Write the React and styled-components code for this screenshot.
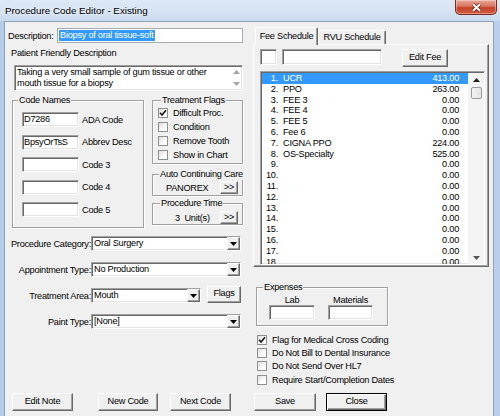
import React from "react";
//styled components
import styled, { createGlobalStyle, css } from "styled-components";

const GlobalStyle = createGlobalStyle`
  html, body { margin: 0; padding: 0; }
  body { width: 500px; height: 416px; overflow: hidden; background: #bfd3ed; }
  * { box-sizing: border-box; }
`;

const uiFont = `"Liberation Sans", Arial, sans-serif`;

//classic 3D borders
const sunken = css`
  border: 1px solid;
  border-color: #a0a0a0 #ffffff #ffffff #a0a0a0;
  box-shadow: inset 1px 1px 0 #696969, inset -1px -1px 0 #e3e3e3;
`;

const raised = css`
  border: 1px solid;
  border-color: #ffffff #696969 #696969 #ffffff;
  box-shadow: inset -1px -1px 0 #a0a0a0;
`;

const fees = [
  ["1.", "UCR", "413.00"],
  ["2.", "PPO", "263.00"],
  ["3.", "FEE 3", "0.00"],
  ["4.", "FEE 4", "0.00"],
  ["5.", "FEE 5", "0.00"],
  ["6.", "Fee 6", "0.00"],
  ["7.", "CIGNA PPO", "224.00"],
  ["8.", "OS-Specialty", "525.00"],
  ["9.", "", "0.00"],
  ["10.", "", "0.00"],
  ["11.", "", "0.00"],
  ["12.", "", "0.00"],
  ["13.", "", "0.00"],
  ["14.", "", "0.00"],
  ["15.", "", "0.00"],
  ["16.", "", "0.00"],
  ["17.", "", "0.00"],
  ["18.", "", "0.00"],
];

const Check = () => (
  <svg width="8" height="8" viewBox="0 0 8 8">
    <polyline points="1,3.8 3,6 7,1.2" fill="none" stroke="#1a1a1a" strokeWidth="1.6" />
  </svg>
);

const Arrow = ({ up, color = "#000" }) => (
  <svg width="7" height="4" viewBox="0 0 7 4">
    <polygon points={up ? "0,4 7,4 3.5,0" : "0,0 7,0 3.5,4"} fill={color} />
  </svg>
);

const CheckItem = ({ checked, label, h }) => (
  <CheckRow $h={h}>
    <CheckSquare>{checked && <Check />}</CheckSquare>
    {label}
  </CheckRow>
);

const Combo = ({ w, value }) => (
  <ComboBox $w={w}>
    <ComboText>{value}</ComboText>
    <DropButton>
      <Arrow />
    </DropButton>
  </ComboBox>
);

const App = () => {
  return (
    <Window>
      <GlobalStyle />
      <TitleBar>
        <Title>Procedure Code Editor - Existing</Title>
        <CloseButton>
          <svg width="11" height="9" viewBox="0 0 11 9">
            <path d="M2 1.2 L9 7.8 M9 1.2 L2 7.8" stroke="#6a1e12" strokeWidth="3.4" />
            <path d="M2 1.2 L9 7.8 M9 1.2 L2 7.8" stroke="#ffffff" strokeWidth="2" />
          </svg>
        </CloseButton>
      </TitleBar>
      <Client>
        <LeftPane>
          <DescRow>
            <DescLabel>Description:</DescLabel>
            <TextBox $w={186} $flat>
              <Selected>Biopsy of oral tissue-soft</Selected>
            </TextBox>
          </DescRow>
          <PlainLabel>Patient Friendly Description</PlainLabel>
          <MemoBox>
            <MemoText>
              Taking a very small sample of gum tissue or other
              <br />
              mouth tissue for a biopsy
            </MemoText>
            <MemoScroll>
              <Arrow up color="#a3a3a3" />
              <Arrow color="#a3a3a3" />
            </MemoScroll>
          </MemoBox>

          <MidRow>
            <GroupBox $w={132} $h={128} $ml={7}>
              <Legend $x={5}>Code Names</Legend>
              <CodeList>
                {[
                  ["D7286", "ADA Code"],
                  ["BpsyOrTsS", "Abbrev Desc"],
                  ["", "Code 3"],
                  ["", "Code 4"],
                  ["", "Code 5"],
                ].map(([v, l]) => (
                  <CodeRow key={l}>
                    <TextBox $w={57}>{v}</TextBox>
                    {l}
                  </CodeRow>
                ))}
              </CodeList>
            </GroupBox>

            <SideColumn>
              <GroupBox $w={91} $h={64}>
                <Legend $x={8}>Treatment Flags</Legend>
                <CheckList $pl={5}>
                  <CheckItem h={14} checked label="Difficult Proc." />
                  <CheckItem h={14} label="Condition" />
                  <CheckItem h={14} label="Remove Tooth" />
                  <CheckItem h={14} label="Show in Chart" />
                </CheckList>
              </GroupBox>
              <GroupBox $w={91} $h={22} $mt={10}>
                <Legend $x={6}>Auto Continuing Care</Legend>
                <PickRow $mt={1}>
                  <PickText $pl={13}>PANOREX</PickText>
                  <Button $w={18} $h={13}>&gt;&gt;</Button>
                </PickRow>
              </GroupBox>
              <GroupBox $w={91} $h={22} $mt={7}>
                <Legend $x={7}>Procedure Time</Legend>
                <PickRow $mt={2}>
                  <PickText $pl={22}>3&nbsp; Unit(s)</PickText>
                  <Button $w={18} $h={13}>&gt;&gt;</Button>
                </PickRow>
              </GroupBox>
            </SideColumn>
          </MidRow>

          <FormList>
            <FormRow>
              <FormLabel>Procedure Category:</FormLabel>
              <Combo w={150} value="Oral Surgery" />
            </FormRow>
            <FormRow>
              <FormLabel>Appointment Type:</FormLabel>
              <Combo w={150} value="No Production" />
            </FormRow>
            <FormRow>
              <FormLabel>Treatment Area:</FormLabel>
              <Combo w={110} value="Mouth" />
              <FlagsButton $w={34} $h={17}>Flags</FlagsButton>
            </FormRow>
            <FormRow>
              <FormLabel>Paint Type:</FormLabel>
              <Combo w={150} value="[None]" />
            </FormRow>
          </FormList>

          <ButtonRow $pl={7}>
            <Button $w={61}>Edit Note</Button>
            <Button $w={60} $ml={25}>New Code</Button>
            <Button $w={61} $ml={12}>Next Code</Button>
          </ButtonRow>
        </LeftPane>

        <RightPane>
          <TabStrip>
            <Tab $active $w={63}>Fee Schedule</Tab>
            <Tab $w={68}>RVU Schedule</Tab>
          </TabStrip>
          <TabPanel>
            <FeeInputs>
              <TextBox $w={17} $h={16} />
              <TextBox $w={100} $h={16} />
              <Button $w={46} $ml={15}>Edit Fee</Button>
            </FeeInputs>
            <ListBox>
              <ListRows>
                {fees.map(([n, name, amt], i) => (
                  <FeeRow key={n} $sel={i === 0}>
                    <FeeNum>{n}</FeeNum>
                    <FeeName>{name}</FeeName>
                    <span>{amt}</span>
                  </FeeRow>
                ))}
              </ListRows>
              <ScrollBar>
                <ScrollArrow>
                  <Arrow up color="#222" />
                </ScrollArrow>
                <Thumb />
                <ScrollArrow $bottom>
                  <Arrow color="#555" />
                </ScrollArrow>
              </ScrollBar>
            </ListBox>
          </TabPanel>

          <GroupBox $w={132} $h={39} $mt={20} $ml={3}>
            <Legend $x={6}>Expenses</Legend>
            <ExpenseCols>
              <ExpenseCol>
                <ExpenseLabel>Lab</ExpenseLabel>
                <TextBox $w={46} />
              </ExpenseCol>
              <ExpenseCol>
                <ExpenseLabel>Materials</ExpenseLabel>
                <TextBox $w={45} />
              </ExpenseCol>
            </ExpenseCols>
          </GroupBox>

          <CheckList $pl={4} $mt={7}>
            <CheckItem h={13.3} checked label="Flag for Medical Cross Coding" />
            <CheckItem h={13.3} label="Do Not Bill to Dental Insurance" />
            <CheckItem h={13.3} label="Do Not Send Over HL7" />
            <CheckItem h={13.3} label="Require Start/Completion Dates" />
          </CheckList>

          <ButtonRow $pl={1}>
            <Button $w={62}>Save</Button>
            <Button $w={61} $ml={10} $default>Close</Button>
          </ButtonRow>
        </RightPane>
      </Client>
    </Window>
  );
};

const Window = styled.div`
  width: 500px;
  height: 416px;
  display: flex;
  flex-direction: column;
  background: linear-gradient(to right, #b6cdea, #c6d8ef 50%, #b9cfeb);
  font-family: ${uiFont};
  font-size: 9.2px;
  letter-spacing: -0.25px;
  color: #000;
  overflow: hidden;
`;

const TitleBar = styled.div`
  height: 21px;
  flex: none;
  display: flex;
  align-items: flex-start;
  background: linear-gradient(to bottom, #dfe9f6 0%, #d4e2f2 60%, #cadbef 100%);
`;

const Title = styled.div`
  padding: 4px 0 0 5px;
  font-size: 9.8px;
  letter-spacing: 0;
  line-height: 13px;
  text-shadow: 0 0 5px #ffffff;
`;

const CloseButton = styled.div`
  margin: 0 3px 0 auto;
  width: 42px;
  height: 15px;
  display: flex;
  align-items: center;
  justify-content: center;
  border: 1px solid #7b2b1e;
  border-top: none;
  border-radius: 0 0 5px 5px;
  background: linear-gradient(to bottom, #eaa89a 0%, #d9735e 45%, #c4422a 55%, #d45d40 100%);
  box-shadow: inset 0 0 0 1px rgba(255, 255, 255, 0.35);
`;

const Client = styled.div`
  flex: 1;
  display: flex;
  margin: 0 6px 0 4px;
  background: #f0f0f0;
  border: 1px solid #8fa1b8;
  border-bottom: none;
`;

const LeftPane = styled.div`
  width: 248px;
  flex: none;
  display: flex;
  flex-direction: column;
  padding-bottom: 5px;
`;

const DescRow = styled.div`
  display: flex;
  align-items: center;
  margin-top: 6px;
`;

const DescLabel = styled.span`
  width: 49px;
  margin-left: 3px;
  white-space: nowrap;
`;

const TextBox = styled.div`
  flex: none;
  width: ${(p) => p.$w}px;
  height: ${(p) => p.$h ?? 15}px;
  padding: 0 1px;
  line-height: 13px;
  white-space: nowrap;
  overflow: hidden;
  background: #ffffff;
  ${(p) => (p.$flat ? css`border: 1px solid #a5acb5;` : sunken)}
`;

const Selected = styled.span`
  display: inline-block;
  padding: 0 1px;
  line-height: 11px;
  background: #3399ff;
  color: #ffffff;
`;

const PlainLabel = styled.div`
  margin: 4px 0 0 6px;
  line-height: 12px;
`;

const MemoBox = styled.div`
  width: 229px;
  height: 26px;
  margin: 6px 0 0 9px;
  display: flex;
  background: #ffffff;
  ${sunken}
`;

const MemoText = styled.div`
  flex: 1;
  padding: 1px 2px;
  line-height: 11px;
  white-space: nowrap;
  overflow: hidden;
`;

const MemoScroll = styled.div`
  width: 12px;
  display: flex;
  flex-direction: column;
  justify-content: space-between;
  align-items: center;
  padding: 4px 0 4px;
`;

const MidRow = styled.div`
  display: flex;
  align-items: flex-start;
  margin-top: 9px;
`;

const GroupBox = styled.div`
  flex: none;
  width: ${(p) => p.$w}px;
  height: ${(p) => p.$h}px;
  margin-top: ${(p) => p.$mt ?? 0}px;
  margin-left: ${(p) => p.$ml ?? 0}px;
  display: flex;
  flex-direction: column;
  border: 1px solid #a0a0a0;
  box-shadow: inset 1px 1px 0 #ffffff, 1px 1px 0 #ffffff;
`;

const Legend = styled.div`
  align-self: flex-start;
  height: 12px;
  margin: -7px 0 0 ${(p) => p.$x}px;
  padding: 0 1px;
  line-height: 12px;
  white-space: nowrap;
  background: #f0f0f0;
`;

const CodeList = styled.div`
  display: flex;
  flex-direction: column;
  gap: 7.6px;
  margin-top: 6px;
  padding-left: 9px;
`;

const CodeRow = styled.div`
  display: flex;
  align-items: center;
  gap: 3px;
  white-space: nowrap;
`;

const SideColumn = styled.div`
  display: flex;
  flex-direction: column;
  margin-left: 8px;
`;

const CheckList = styled.div`
  display: flex;
  flex-direction: column;
  padding-left: ${(p) => p.$pl}px;
  margin-top: ${(p) => p.$mt ?? 0}px;
`;

const CheckRow = styled.div`
  display: flex;
  align-items: center;
  height: ${(p) => p.$h}px;
  white-space: nowrap;
`;

const CheckSquare = styled.span`
  flex: none;
  width: 10px;
  height: 10px;
  margin-right: 5px;
  display: flex;
  align-items: center;
  justify-content: center;
  border: 1px solid #8e8f8f;
  background: linear-gradient(135deg, #dedede, #ffffff 70%);
`;

const PickRow = styled.div`
  display: flex;
  align-items: center;
  height: 13px;
  margin-top: ${(p) => p.$mt}px;
  padding-right: 4px;
`;

const PickText = styled.span`
  flex: 1;
  padding-left: ${(p) => p.$pl}px;
  white-space: nowrap;
`;

const Button = styled.button`
  flex: none;
  width: ${(p) => p.$w}px;
  height: ${(p) => p.$h ?? 18}px;
  margin-left: ${(p) => p.$ml ?? 0}px;
  padding: 0;
  font: inherit;
  letter-spacing: inherit;
  line-height: 1;
  color: #000;
  background: #f0f0f0;
  white-space: nowrap;
  ${raised}
  ${(p) =>
    p.$default &&
    css`
      border-color: #000000;
      box-shadow: inset 1px 1px 0 #ffffff, inset -1px -1px 0 #696969, inset -2px -2px 0 #a0a0a0;
    `}
`;

const FlagsButton = styled(Button)`
  margin: 0 0 3px 6px;
`;

const FormList = styled.div`
  display: flex;
  flex-direction: column;
  gap: 11px;
  margin-top: 8px;
`;

const FormRow = styled.div`
  display: flex;
  align-items: center;
  height: 15px;
`;

const FormLabel = styled.span`
  width: 86px;
  text-align: right;
  white-space: nowrap;
`;

const ComboBox = styled.div`
  flex: none;
  width: ${(p) => p.$w}px;
  height: 15px;
  display: flex;
  background: #ffffff;
  ${sunken}
`;

const ComboText = styled.span`
  flex: 1;
  padding-left: 2px;
  line-height: 13px;
  white-space: nowrap;
`;

const DropButton = styled.span`
  width: 13px;
  display: flex;
  align-items: center;
  justify-content: center;
  background: #f0f0f0;
  ${raised}
`;

const ButtonRow = styled.div`
  display: flex;
  margin-top: auto;
  padding-left: ${(p) => p.$pl}px;
`;

const RightPane = styled.div`
  width: 236px;
  flex: none;
  display: flex;
  flex-direction: column;
  padding-bottom: 5px;
`;

const TabStrip = styled.div`
  display: flex;
  align-items: flex-end;
  height: 17px;
  margin-top: 5px;
  padding-left: 2px;
  position: relative;
  z-index: 1;
`;

const Tab = styled.div`
  width: ${(p) => p.$w}px;
  height: ${(p) => (p.$active ? 18 : 14)}px;
  margin-bottom: ${(p) => (p.$active ? -1 : 0)}px;
  padding-top: ${(p) => (p.$active ? 3 : 1)}px;
  text-align: center;
  line-height: 11px;
  white-space: nowrap;
  background: #f0f0f0;
  border: 1px solid;
  border-color: #ffffff #696969 transparent #ffffff;
  border-bottom: none;
  box-shadow: inset -1px 0 0 #a0a0a0;
  border-radius: 2px 2px 0 0;
`;

const TabPanel = styled.div`
  height: 223px;
  display: flex;
  flex-direction: column;
  padding: 4px 3px 0 6px;
  border: 1px solid;
  border-color: #ffffff #696969 #696969 #ffffff;
  box-shadow: inset -1px -1px 0 #a0a0a0;
`;

const FeeInputs = styled.div`
  display: flex;
  align-items: flex-start;
  gap: 0 5px;
  height: 18px;
`;

const ListBox = styled.div`
  width: 225px;
  height: 194px;
  margin-top: 4px;
  display: flex;
  padding: 1px 0 0 1px;
  background: #ffffff;
  ${sunken}
`;

const ListRows = styled.div`
  flex: 1;
  overflow: hidden;
`;

const FeeRow = styled.div`
  display: flex;
  height: 10.8px;
  line-height: 10.8px;
  padding-right: 9px;
  white-space: nowrap;
  background: ${(p) => (p.$sel ? "#3399ff" : "transparent")};
  color: ${(p) => (p.$sel ? "#ffffff" : "#000000")};
`;

const FeeNum = styled.span`
  width: 16px;
  margin-right: 5px;
  text-align: right;
`;

const FeeName = styled.span`
  flex: 1;
`;

const ScrollBar = styled.div`
  width: 16px;
  display: flex;
  flex-direction: column;
  align-items: center;
  background: #f4f4f4;
`;

const ScrollArrow = styled.div`
  width: 16px;
  height: 13px;
  display: flex;
  align-items: center;
  justify-content: center;
  margin-top: ${(p) => (p.$bottom ? "auto" : 0)};
`;

const Thumb = styled.div`
  width: 11px;
  height: 12px;
  margin-top: 1px;
  border: 1px solid #9a9a9a;
  border-radius: 2px;
  background: linear-gradient(to right, #f3f3f3, #e4e4e4);
`;

const ExpenseCols = styled.div`
  display: flex;
  gap: 13px;
  padding-left: 12px;
  margin-top: 2px;
`;

const ExpenseCol = styled.div`
  display: flex;
  flex-direction: column;
  align-items: center;
`;

const ExpenseLabel = styled.span`
  line-height: 10px;
  white-space: nowrap;
`;

export default App;
